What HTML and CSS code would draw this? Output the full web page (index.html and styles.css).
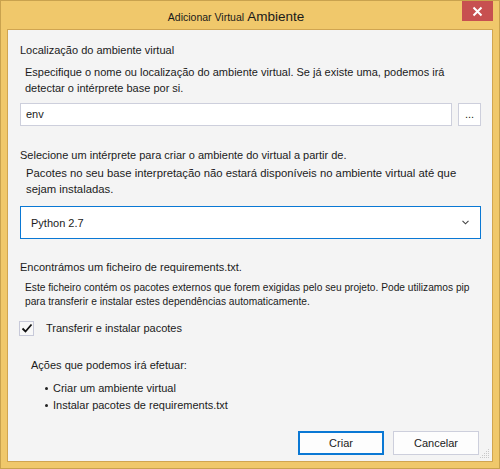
FILE: index.html
```html
<!DOCTYPE html>
<html lang="pt">
<head>
<meta charset="utf-8">
<title>Adicionar Virtual Ambiente</title>
<link rel="stylesheet" href="styles.css">
</head>
<body>
<div class="window">
  <div class="titlebar">
    <div class="title"><span class="t-small">Adicionar Virtual</span> <span class="t-big">Ambiente</span></div>
    <div class="close">
      <svg width="11" height="11" viewBox="0 0 11 11"><path d="M1.5 1.5 L9.5 9.5 M9.5 1.5 L1.5 9.5" stroke="#fff" stroke-width="2" fill="none"/></svg>
    </div>
  </div>
  <div class="content">
    <div class="label l1">Localização do ambiente virtual</div>
    <div class="desc d1">Especifique o nome ou localização do ambiente virtual. Se já existe uma, podemos irá detectar o intérprete base por si.</div>
    <div class="input-row">
      <div class="input">env</div>
      <div class="browse">...</div>
    </div>
    <div class="label l2">Selecione um intérprete para criar o ambiente do virtual a partir de.</div>
    <div class="desc d2">Pacotes no seu base interpretação não estará disponíveis no ambiente virtual até que sejam instaladas.</div>
    <div class="select">
      <span>Python 2.7</span>
      <svg width="7" height="5" viewBox="0 0 7 5"><path d="M0.5 0.8 L3.5 3.8 L6.5 0.8" stroke="#444" stroke-width="1.1" fill="none"/></svg>
    </div>
    <div class="label l3">Encontrámos um ficheiro de requirements.txt.</div>
    <div class="small-desc">Este ficheiro contém os pacotes externos que forem exigidas pelo seu projeto. Pode utilizamos pip para transferir e instalar estes dependências automaticamente.</div>
    <div class="check-row">
      <div class="checkbox">
        <svg width="12" height="10" viewBox="0 0 12 10"><path d="M1.5 5.5 L4.5 8.5 L10.5 1.5" stroke="#111" stroke-width="1.8" fill="none"/></svg>
      </div>
      <span class="check-label">Transferir e instalar pacotes</span>
    </div>
    <div class="actions">Ações que podemos irá efetuar:</div>
    <ul class="bullets">
      <li>Criar um ambiente virtual</li>
      <li>Instalar pacotes de requirements.txt</li>
    </ul>
    <div class="footer">
      <div class="btn primary">Criar</div>
      <div class="btn">Cancelar</div>
    </div>
    <div class="grip">
      <svg width="10" height="10" viewBox="0 0 10 10" fill="#c9c9c9">
        <rect x="8" y="0" width="1" height="1"/>
        <rect x="6" y="2" width="1" height="1"/><rect x="8" y="2" width="1" height="1"/>
        <rect x="4" y="4" width="1" height="1"/><rect x="6" y="4" width="1" height="1"/><rect x="8" y="4" width="1" height="1"/>
        <rect x="2" y="6" width="1" height="1"/><rect x="4" y="6" width="1" height="1"/><rect x="6" y="6" width="1" height="1"/><rect x="8" y="6" width="1" height="1"/>
        <rect x="0" y="8" width="1" height="1"/><rect x="2" y="8" width="1" height="1"/><rect x="4" y="8" width="1" height="1"/><rect x="6" y="8" width="1" height="1"/><rect x="8" y="8" width="1" height="1"/>
      </svg>
    </div>
  </div>
</div>
</body>
</html>
```

FILE: styles.css
```css
html, body {
  margin: 0;
  padding: 0;
}
body {
  width: 500px;
  height: 469px;
  font-family: "Liberation Sans", Arial, sans-serif;
  font-size: 11px;
  color: #1b1b1b;
}
.window {
  box-sizing: border-box;
  width: 500px;
  height: 469px;
  background: #f0c86b;
  border: 1px solid #c9a24e;
  display: flex;
  flex-direction: column;
}
.titlebar {
  position: relative;
  height: 28px;
  flex: none;
}
.title {
  text-align: center;
  padding-top: 7px;
  padding-right: 28px;
  line-height: 17px;
  color: #1a1a1a;
}
.t-small {
  font-size: 10.5px;
}
.t-big {
  font-size: 13.5px;
}
.close {
  position: absolute;
  top: 0;
  right: 6px;
  width: 31px;
  height: 20px;
  background: #c75050;
  display: flex;
  align-items: center;
  justify-content: center;
}
.content {
  position: relative;
  flex: 1;
  margin: 0 6px 6px 6px;
  border: 1px solid #d0a551;
  background: #f4f4f4;
  padding: 0 11px 0 12px;
  display: flex;
  flex-direction: column;
}
.label {
  line-height: 16px;
  white-space: nowrap;
}
.l1 { margin-top: 12px; }
.l2 { margin-top: 21px; }
.l3 { margin-top: 20px; }
.desc {
  line-height: 16px;
  padding-left: 5px;
}
.d1 { margin-top: 6px; }
.d2 { margin-top: 2px; padding-left: 6px; font-size: 11.3px; }
.input-row {
  display: flex;
  gap: 6px;
  margin-top: 7px;
}
.input {
  box-sizing: border-box;
  flex: 1;
  height: 23px;
  background: #fff;
  border: 1px solid #cdcfdc;
  padding-left: 5px;
  line-height: 21px;
}
.browse {
  box-sizing: border-box;
  width: 23px;
  height: 23px;
  background: #fff;
  border: 1px solid #cdcfdc;
  text-align: center;
  line-height: 21px;
}
.select {
  box-sizing: border-box;
  height: 33px;
  margin-top: 9px;
  background: #fff;
  border: 1px solid #0a78d4;
  display: flex;
  align-items: center;
  justify-content: space-between;
  padding: 0 11px 0 10px;
}
.small-desc {
  font-size: 10.2px;
  line-height: 14px;
  margin-top: 6px;
  padding-left: 5px;
}
.check-row {
  display: flex;
  align-items: center;
  margin-top: 11px;
  height: 16px;
}
.checkbox {
  box-sizing: border-box;
  width: 15px;
  height: 15px;
  margin-left: -1px;
  border: 1px solid #c7c9d9;
  background: #f8f8f8;
  display: flex;
  align-items: center;
  justify-content: center;
}
.check-label {
  margin-left: 12px;
}
.actions {
  margin-top: 21px;
  padding-left: 11px;
  line-height: 16px;
}
.bullets {
  margin: 7px 0 0 0;
  padding: 0 0 0 33px;
  list-style: none;
}
.bullets li {
  position: relative;
  line-height: 17px;
}
.bullets li::before {
  content: "";
  position: absolute;
  left: -8px;
  top: 7px;
  width: 3px;
  height: 3px;
  background: #222;
  border-radius: 50%;
}
.footer {
  margin-top: auto;
  margin-bottom: 6px;
  display: flex;
  justify-content: flex-end;
  gap: 9px;
  padding-right: 2px;
}
.btn {
  box-sizing: border-box;
  width: 86px;
  height: 24px;
  background: #fdfdfd;
  border: 1px solid #cdcfdc;
  text-align: center;
  line-height: 22px;
}
.btn.primary {
  border: 2px solid #0a78d4;
  line-height: 20px;
}
.grip {
  position: absolute;
  right: 2px;
  bottom: 2px;
  width: 10px;
  height: 10px;
}
```
